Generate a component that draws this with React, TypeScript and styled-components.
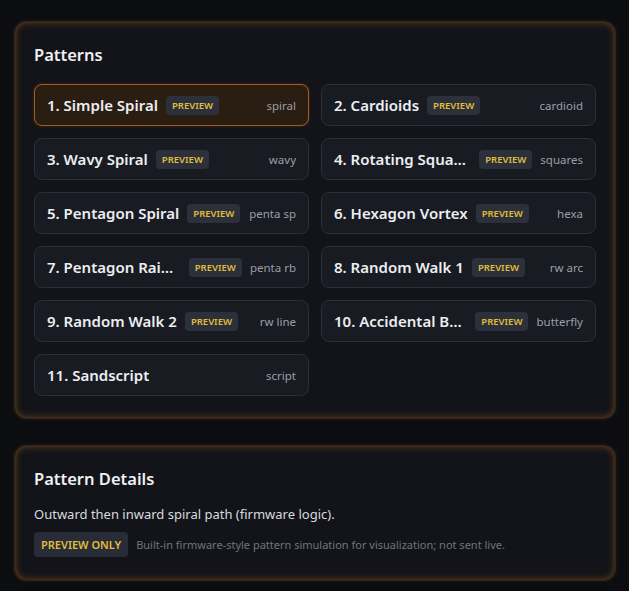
import React from "react";
import styled, { createGlobalStyle } from "styled-components";

const Global = createGlobalStyle`
  html, body { margin: 0; padding: 0; background: #0c0d10; }
  body { font-family: "Noto Sans", "Open Sans", sans-serif; color: #e8e9ec; }
`;

const Page = styled.div`
  display: flex;
  flex-direction: column;
  gap: 26px;
  padding: 21px 13px 14px 14px;
`;

const Panel = styled.section<{ $pt: number; $pb: number }>`
  background: #131419;
  border: 1px solid #2b2620;
  border-radius: 12px;
  padding: ${(p) => p.$pt}px 19px ${(p) => p.$pb}px;
  box-shadow: inset 0 0 7px rgba(196, 110, 20, 0.55), 0 0 4px rgba(196, 110, 20, 0.15);
`;

const Title = styled.h2<{ $gap: number }>`
  margin: 0 0 ${(p) => p.$gap}px;
  font-size: 16.5px;
  font-weight: 600;
  line-height: 28px;
  color: #eef0f3;
`;

const Grid = styled.div`
  display: grid;
  grid-template-columns: 1fr 1fr;
  gap: 12px;
`;

const Card = styled.div<{ $active?: boolean }>`
  display: flex;
  align-items: center;
  height: 42px;
  box-sizing: border-box;
  padding: 0 12px;
  border-radius: 8px;
  border: 1px solid ${(p) => (p.$active ? "#a85c19" : "#2a2f39")};
  background: ${(p) => (p.$active ? "#2a1d12" : "#181b22")};
  box-shadow: ${(p) => (p.$active ? "0 0 3px rgba(200,110,30,0.3)" : "none")};
  gap: 8px;
  min-width: 0;
`;

const Left = styled.div`
  display: flex;
  align-items: center;
  gap: 8px;
  flex: 1;
  min-width: 0;
`;

const Name = styled.span`
  font-size: 15px;
  font-weight: 600;
  color: #eceef1;
  white-space: nowrap;
  overflow: hidden;
  text-overflow: ellipsis;
  min-width: 0;
`;

const Badge = styled.span`
  flex: none;
  background: #2b303b;
  color: #e2bd3c;
  font-size: 9.5px;
  font-weight: 600;
  padding: 3px 6px;
  border-radius: 4px;
  line-height: 13px;
`;

const Key = styled.span`
  flex: none;
  margin-left: auto;
  font-size: 11.5px;
  color: #9a9fa8;
  white-space: nowrap;
`;

const Desc = styled.p`
  margin: 0 0 8px;
  font-size: 13px;
  color: #d8dadf;
  line-height: 20px;
`;

const Row = styled.div`
  display: flex;
  align-items: center;
  gap: 8px;
`;

const BigBadge = styled.span`
  background: #272c36;
  color: #e2bd3c;
  font-size: 11px;
  font-weight: 600;
  padding: 6px 7px;
  border-radius: 4px;
  line-height: 13px;
`;

const Note = styled.span`
  font-size: 11px;
  color: #6f747d;
`;

const patterns = [
  { name: "1. Simple Spiral", key: "spiral", preview: true },
  { name: "2. Cardioids", key: "cardioid", preview: true },
  { name: "3. Wavy Spiral", key: "wavy", preview: true },
  { name: "4. Rotating Squares", key: "squares", preview: true },
  { name: "5. Pentagon Spiral", key: "penta sp", preview: true },
  { name: "6. Hexagon Vortex", key: "hexa", preview: true },
  { name: "7. Pentagon Rainbow", key: "penta rb", preview: true },
  { name: "8. Random Walk 1", key: "rw arc", preview: true },
  { name: "9. Random Walk 2", key: "rw line", preview: true },
  { name: "10. Accidental Butterfly", key: "butterfly", preview: true },
  { name: "11. Sandscript", key: "script", preview: false },
];

export default function App() {
  return (
    <>
      <Global />
      <Page>
        <Panel $pt={19} $pb={22}>
          <Title $gap={15}>Patterns</Title>
          <Grid>
            {patterns.map((p, i) => (
              <Card key={p.name} $active={i === 0}>
                <Left>
                  <Name>{p.name}</Name>
                  {p.preview && <Badge>PREVIEW</Badge>}
                </Left>
                <Key>{p.key}</Key>
              </Card>
            ))}
          </Grid>
        </Panel>
        <Panel $pt={19} $pb={23}>
          <Title $gap={11}>Pattern Details</Title>
          <Desc>Outward then inward spiral path (firmware logic).</Desc>
          <Row>
            <BigBadge>PREVIEW ONLY</BigBadge>
            <Note>Built-in firmware-style pattern simulation for visualization; not sent live.</Note>
          </Row>
        </Panel>
      </Page>
    </>
  );
}
